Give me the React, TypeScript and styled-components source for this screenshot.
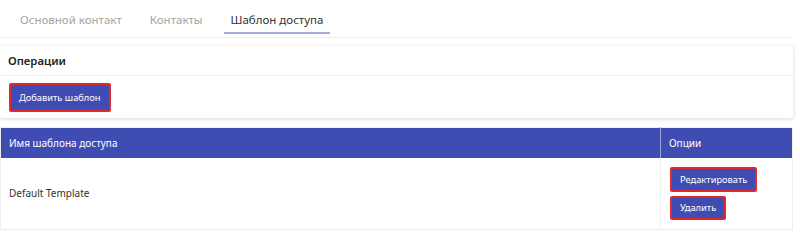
import React from "react";
import styled, { createGlobalStyle } from "styled-components";

const GlobalStyle = createGlobalStyle`
  body {
    margin: 0;
    background: #fff;
    font-family: "Noto Sans", "Open Sans", Arial, sans-serif;
    color: #333;
  }
`;

const Page = styled.div`
  width: 793px;
`;

const Nav = styled.div`
  padding-bottom: 3px;
  border-bottom: 1px solid #efefef;
`;

const Tabs = styled.div`
  display: flex;
  padding-left: 13px;
  height: 34px;
`;

const Tab = styled.div<{ active?: boolean }>`
  box-sizing: border-box;
  height: 34px;
  padding: 11px 7px 0;
  margin-right: 14px;
  font-size: 11.5px;
  line-height: 18px;
  color: ${p => (p.active ? "#333" : "#a3a3a3")};
  border-bottom: 2px solid ${p => (p.active ? "#a4acd9" : "transparent")};
`;

const Card = styled.div`
  margin-top: 8px;
  background: #fff;
  border-radius: 3px;
  box-shadow: 0 1px 4px rgba(0, 0, 0, 0.16);
`;

const CardHeader = styled.div`
  height: 29px;
  padding: 0 8px;
  display: flex;
  align-items: center;
  font-size: 11.3px;
  font-weight: 600;
  color: #222;
  border-bottom: 1px solid #eee;
`;

const CardBody = styled.div`
  padding: 7px 9px 6px;
  display: flex;
`;

const Button = styled.button<{ h: number }>`
  display: inline-flex;
  align-items: center;
  box-sizing: border-box;
  height: ${p => p.h}px;
  padding: 0 8px;
  background: #3f4db3;
  color: #fff;
  font-family: inherit;
  font-size: 9.3px;
  border: 2px solid #e0282f;
  border-radius: 2px;
  cursor: pointer;
`;

const Table = styled.table`
  margin-top: 9px;
  width: 100%;
  border-collapse: collapse;
  font-size: 10px;
  border: 1px solid #eee;
`;

const HeadCell = styled.th<{ narrow?: boolean }>`
  box-sizing: border-box;
  background: #3f4db3;
  color: #fff;
  font-weight: 400;
  text-align: left;
  height: 30px;
  padding: 0 8px;
  width: ${p => (p.narrow ? "132px" : "auto")};
  border-left: ${p => (p.narrow ? "1px solid #9aa3d8" : "none")};
`;

const Cell = styled.td<{ narrow?: boolean }>`
  box-sizing: border-box;
  height: 71px;
  padding: ${p => (p.narrow ? "9px 8px 9px 9px" : "0 8px")};
  color: #333;
  border-left: ${p => (p.narrow ? "1px solid #eee" : "none")};
`;

const Actions = styled.div`
  display: flex;
  flex-direction: column;
  align-items: flex-start;
  gap: 4px;
`;

export default function App() {
  return (
    <Page>
      <GlobalStyle />
      <Nav>
        <Tabs>
          <Tab>Основной контакт</Tab>
          <Tab>Контакты</Tab>
          <Tab active>Шаблон доступа</Tab>
        </Tabs>
      </Nav>
      <Card>
        <CardHeader>Операции</CardHeader>
        <CardBody>
          <Button h={29}>Добавить шаблон</Button>
        </CardBody>
      </Card>
      <Table>
        <thead>
          <tr>
            <HeadCell>Имя шаблона доступа</HeadCell>
            <HeadCell narrow>Опции</HeadCell>
          </tr>
        </thead>
        <tbody>
          <tr>
            <Cell>Default Template</Cell>
            <Cell narrow>
              <Actions>
                <Button h={25}>Редактировать</Button>
                <Button h={24}>Удалить</Button>
              </Actions>
            </Cell>
          </tr>
        </tbody>
      </Table>
    </Page>
  );
}
